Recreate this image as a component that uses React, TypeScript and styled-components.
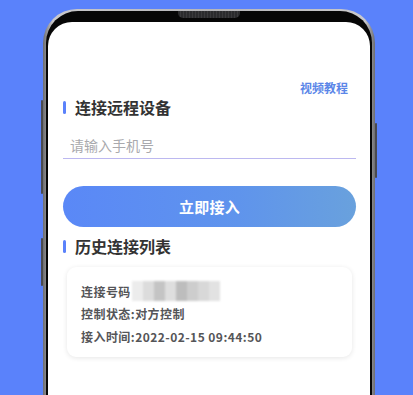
import React from "react";
import styled, { createGlobalStyle } from "styled-components";

const Global = createGlobalStyle`
  html, body { margin: 0; padding: 0; }
  body {
    background: #5a82fb;
    font-family: "Noto Sans CJK SC", "Noto Sans", sans-serif;
    overflow: hidden;
  }
`;

const Page = styled.div`
  height: 395px;
  padding: 9px 0 0 43px;
  box-sizing: border-box;
  overflow: hidden;
`;

const Phone = styled.div`
  position: relative;
  width: 332px;
  height: 400px;
  box-sizing: border-box;
  padding: 2px 3px 0;
  border-radius: 34px 34px 0 0;
  background: linear-gradient(90deg, #6d6d70 0%, #c9c9cc 3%, #b5b5b8 50%, #c9c9cc 97%, #6d6d70 100%);
`;

const SideButton = styled.div<{ $side: "left" | "right"; $top: number; $h: number }>`
  position: absolute;
  top: ${(p) => p.$top}px;
  ${(p) => (p.$side === "left" ? "left: -2px;" : "right: -2px;")}
  width: 2px;
  height: ${(p) => p.$h}px;
  background: #4a4a4e;
  border-radius: 1px;
`;

const Bezel = styled.div`
  position: relative;
  height: 100%;
  box-sizing: border-box;
  padding: 11px 2px 0;
  border-radius: 32px 32px 0 0;
  background: #060606;
`;

const Speaker = styled.div`
  position: absolute;
  top: 0;
  left: 132px;
  width: 62px;
  height: 7px;
  border-radius: 0 0 5px 5px;
  background: repeating-linear-gradient(90deg, #2b2b2d 0 2px, #3a3a3c 2px 3px);
`;

const Screen = styled.div`
  height: 100%;
  box-sizing: border-box;
  background: #ffffff;
  border-radius: 24px 24px 0 0;
  padding: 58px 14px 0 15px;
  display: flex;
  flex-direction: column;
`;

const LinkRow = styled.div`
  display: flex;
  justify-content: flex-end;
  padding-right: 8px;
`;

const Link = styled.span`
  font-size: 12px;
  line-height: 16px;
  font-weight: 700;
  color: #5b86e8;
`;

const SectionTitle = styled.div<{ $mt: number }>`
  display: flex;
  align-items: center;
  gap: 9px;
  margin-top: ${(p) => p.$mt}px;
  height: 20px;
  font-size: 16px;
  font-weight: 700;
  color: #333333;
`;

const Bar = styled.span`
  width: 3px;
  height: 13px;
  border-radius: 1.5px;
  background: #5b82fb;
`;

const InputRow = styled.div`
  margin-top: 14px;
  height: 27px;
  display: flex;
  align-items: center;
  padding-left: 7px;
  border-bottom: 1px solid #bcb8f0;
  font-size: 14px;
  color: #a9a9ad;
`;

const ConnectButton = styled.div`
  margin-top: 27px;
  height: 41px;
  border-radius: 21px;
  background: linear-gradient(90deg, #5a88f7 0%, #5f94ec 60%, #69a1dd 100%);
  display: flex;
  align-items: center;
  justify-content: center;
  color: #ffffff;
  font-size: 15px;
  font-weight: 700;
  letter-spacing: 0.3px;
`;

const Card = styled.div`
  margin: 11px 4px 0;
  height: 90px;
  box-sizing: border-box;
  padding: 13px 14px 0;
  border-radius: 9px;
  background: #ffffff;
  box-shadow: 0 1px 5px rgba(0, 0, 0, 0.1);
  display: flex;
  flex-direction: column;
`;

const Line = styled.div`
  display: flex;
  align-items: center;
  height: 22.5px;
  font-size: 12px;
  font-weight: 700;
  letter-spacing: 0.45px;
  color: #555558;
`;

const Blur = styled.span`
  display: flex;
  margin-left: 1px;
  height: 20px;
  filter: blur(1px);
`;

const Pixel = styled.span<{ $c: string }>`
  width: 11px;
  height: 100%;
  background: ${(p) => p.$c};
`;

const pixels = ["#ececec", "#dcdcdc", "#c4c4c4", "#dedede", "#bdbdbd", "#cdcdcd", "#d8d8d8", "#e2e2e2"];

export default function App() {
  return (
    <>
      <Global />
      <Page>
        <Phone>
          <SideButton $side="left" $top={91} $h={94} />
          <SideButton $side="left" $top={229} $h={48} />
          <SideButton $side="right" $top={114} $h={55} />
          <Bezel>
            <Speaker />
            <Screen>
              <LinkRow>
                <Link>视频教程</Link>
              </LinkRow>
              <SectionTitle $mt={1}>
                <Bar />
                连接远程设备
              </SectionTitle>
              <InputRow>请输入手机号</InputRow>
              <ConnectButton>立即接入</ConnectButton>
              <SectionTitle $mt={9}>
                <Bar />
                历史连接列表
              </SectionTitle>
              <Card>
                <Line>
                  连接号码
                  <Blur>
                    {pixels.map((c, i) => (
                      <Pixel key={i} $c={c} />
                    ))}
                  </Blur>
                </Line>
                <Line>控制状态:对方控制</Line>
                <Line>接入时间:2022-02-15 09:44:50</Line>
              </Card>
            </Screen>
          </Bezel>
        </Phone>
      </Page>
    </>
  );
}
